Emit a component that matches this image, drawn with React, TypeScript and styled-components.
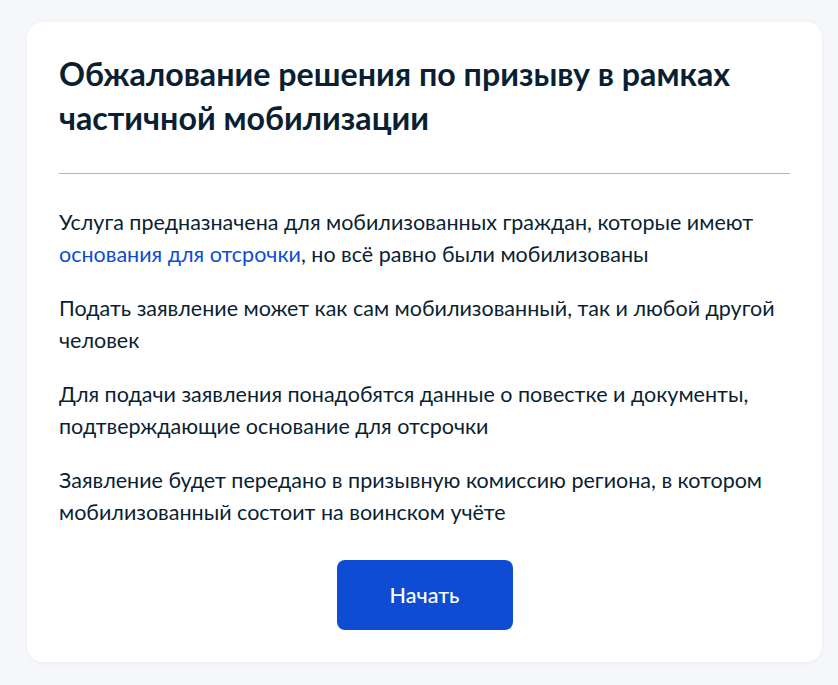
import styled, { createGlobalStyle } from "styled-components";

const GlobalStyle = createGlobalStyle`
  html, body {
    margin: 0;
    padding: 0;
    background: #f5f7fa;
  }
  body {
    font-family: Lato, "Noto Sans", sans-serif;
    color: #0b1f33;
  }
`;

const Page = styled.div`
  padding: 22px 16px 23px 27px;
`;

const Card = styled.section`
  background: #fff;
  border-radius: 16px;
  box-shadow: 0 1px 4px rgba(11, 31, 51, 0.05);
  padding: 30px 32px 32px 32px;
`;

const Title = styled.h1`
  margin: 0;
  font-size: 32.2px;
  line-height: 43.5px;
  font-weight: 700;
  color: #0b1f33;
`;

const Divider = styled.hr`
  border: none;
  height: 1px;
  background: #a9b3d6;
  margin: 34px 0 32px;
`;

const Text = styled.p`
  margin: 0 0 22px;
  font-size: 21.5px;
  line-height: 32px;
  color: #0b1f33;
`;

const Link = styled.a`
  color: #0d4cd3;
  text-decoration: none;
`;

const Actions = styled.div`
  display: flex;
  justify-content: center;
  margin-top: 32px;
`;

const Button = styled.button`
  width: 176px;
  height: 70px;
  border: none;
  border-radius: 8px;
  background: #0d4cd3;
  color: #fff;
  font-family: Lato, "Noto Sans", sans-serif;
  font-size: 21.5px;
  font-weight: 500;
  cursor: pointer;
`;

const items = [
  "Подать заявление может как сам мобилизованный, так и любой другой человек",
  "Для подачи заявления понадобятся данные о повестке и документы, подтверждающие основание для отсрочки",
  "Заявление будет передано в призывную комиссию региона, в котором мобилизованный состоит на воинском учёте",
];

const App = () => {
  return (
    <Page>
      <GlobalStyle />
      <Card>
        <Title>Обжалование решения по призыву в рамках частичной мобилизации</Title>
        <Divider />
        <Text>
          Услуга предназначена для мобилизованных граждан, которые имеют{" "}
          <Link href="#">основания для отсрочки</Link>, но всё равно были мобилизованы
        </Text>
        {items.map((item) => (
          <Text key={item}>{item}</Text>
        ))}
        <Actions>
          <Button>Начать</Button>
        </Actions>
      </Card>
    </Page>
  );
};

export default App;
